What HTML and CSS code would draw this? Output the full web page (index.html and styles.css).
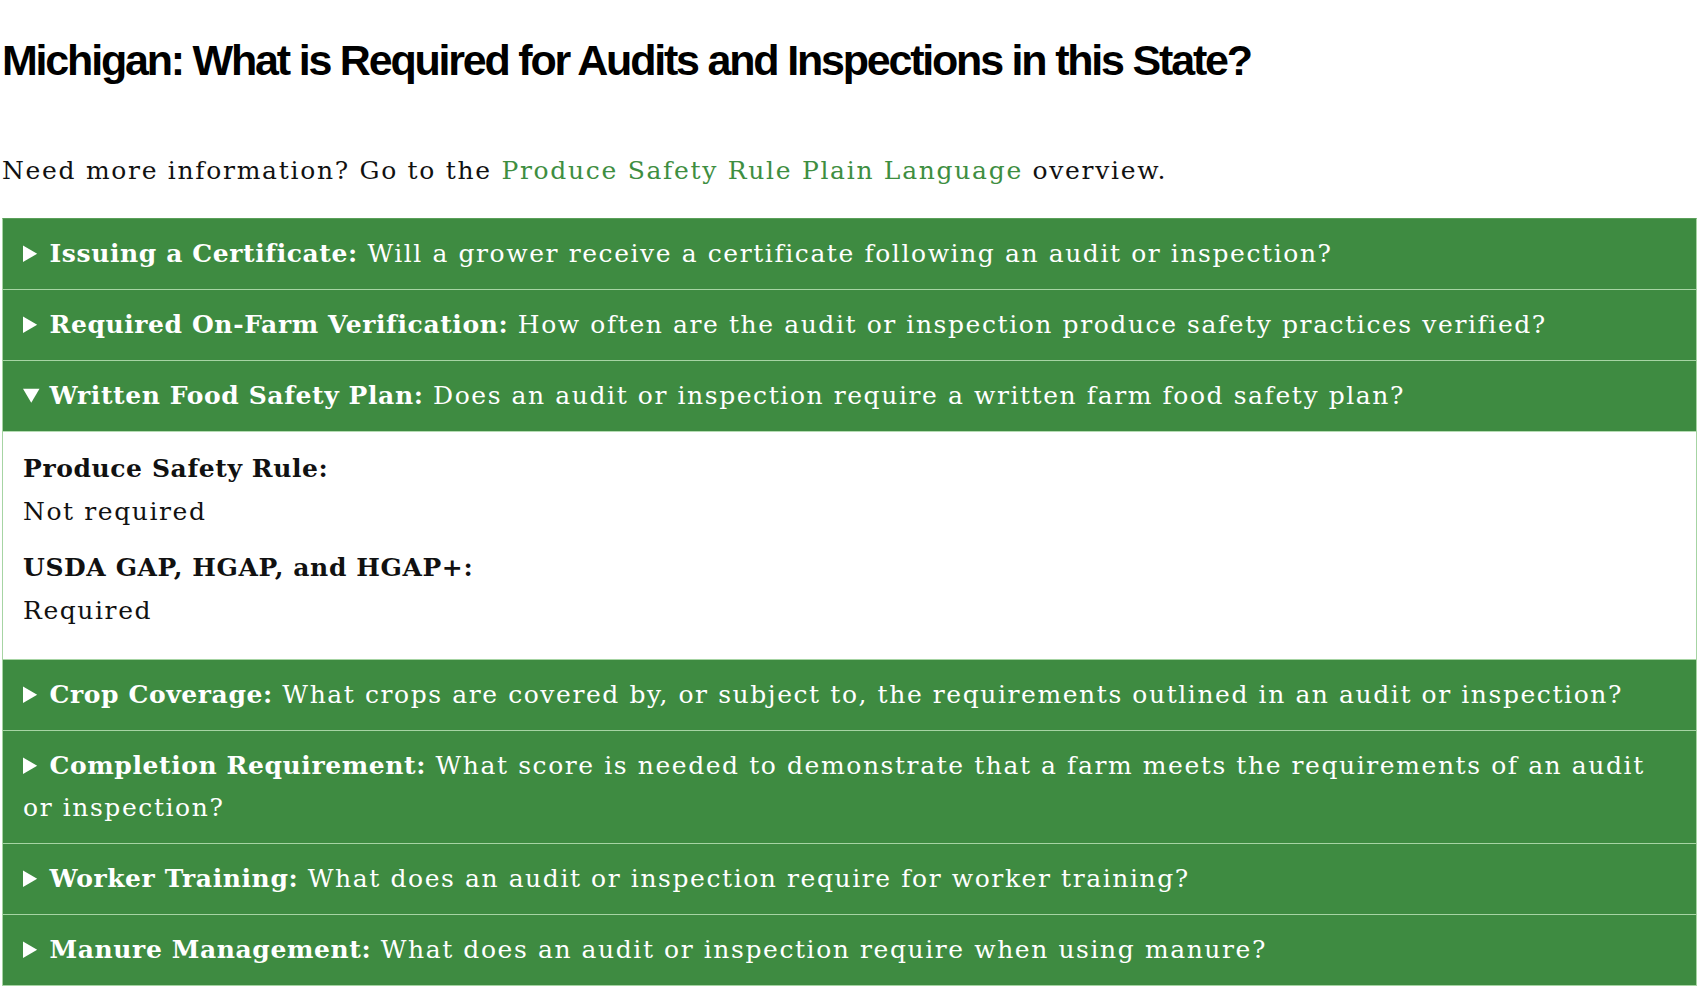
FILE: index.html
```html
<!DOCTYPE html>
<html lang="en">
<head>
<meta charset="utf-8">
<title>Michigan Audits and Inspections</title>
<link rel="stylesheet" href="styles.css">
</head>
<body>
<main class="page">
  <h1 class="title">Michigan: What is Required for Audits and Inspections in this State?</h1>
  <p class="intro">Need more information? Go to the <a class="link" href="#">Produce Safety Rule Plain Language</a> overview.</p>
  <div class="accordion">
    <details class="item">
      <summary class="head"><strong>Issuing a Certificate:</strong> Will a grower receive a certificate following an audit or inspection?</summary>
    </details>
    <details class="item">
      <summary class="head"><strong>Required On-Farm Verification:</strong> How often are the audit or inspection produce safety practices verified?</summary>
    </details>
    <details class="item" open>
      <summary class="head"><strong>Written Food Safety Plan:</strong> Does an audit or inspection require a written farm food safety plan?</summary>
      <div class="panel">
        <div class="group">
          <strong class="label">Produce Safety Rule:</strong>
          <span class="value">Not required</span>
        </div>
        <div class="group">
          <strong class="label">USDA GAP, HGAP, and HGAP+:</strong>
          <span class="value">Required</span>
        </div>
      </div>
    </details>
    <details class="item">
      <summary class="head"><strong>Crop Coverage:</strong> What crops are covered by, or subject to, the requirements outlined in an audit or inspection?</summary>
    </details>
    <details class="item">
      <summary class="head"><strong>Completion Requirement:</strong> What score is needed to demonstrate that a farm meets the requirements of an audit or inspection?</summary>
    </details>
    <details class="item">
      <summary class="head"><strong>Worker Training:</strong> What does an audit or inspection require for worker training?</summary>
    </details>
    <details class="item">
      <summary class="head"><strong>Manure Management:</strong> What does an audit or inspection require when using manure?</summary>
    </details>
  </div>
</main>
</body>
</html>
```
FILE: styles.css
```css
html, body {
  margin: 0;
  padding: 0;
  background: #ffffff;
}

.page {
  padding: 0 3px 0 2px;
  font-family: "DejaVu Serif", serif;
  color: #111111;
}

.title {
  margin: 0;
  padding-top: 36px;
  font-family: "Liberation Sans", Arial, sans-serif;
  font-weight: 700;
  font-size: 43px;
  line-height: 48px;
  color: #000000;
  letter-spacing: -2.2px;
  word-spacing: 0;
}

.intro {
  margin: 0;
  padding-top: 66px;
  font-size: 25px;
  line-height: 42px;
  letter-spacing: 1.7px;
}

.link {
  color: #3e8e41;
  text-decoration: none;
}

.accordion {
  margin-top: 26px;
}

.item {
  border: 1px solid #a6d4a3;
  border-top: none;
}

.item:first-child {
  border-top: 1px solid #5aa05a;
}

.head {
  background: #3e8b41;
  color: #ffffff;
  font-size: 25px;
  line-height: 42px;
  letter-spacing: 1.58px;
  padding: 14px 20px 14px 20px;
  border-bottom: 1px solid #b5dcb3;
  cursor: pointer;
}

.head strong,
.label {
  font-weight: 700;
  letter-spacing: 0.6px;
}

.item:not([open]) .head {
  border-bottom: none;
}

.panel {
  padding: 15px 20px 27px 20px;
  background: #ffffff;
  color: #111111;
  font-size: 25px;
  line-height: 43px;
  letter-spacing: 1.58px;
  display: flex;
  flex-direction: column;
  gap: 13px;
}

.group {
  display: flex;
  flex-direction: column;
}
```
